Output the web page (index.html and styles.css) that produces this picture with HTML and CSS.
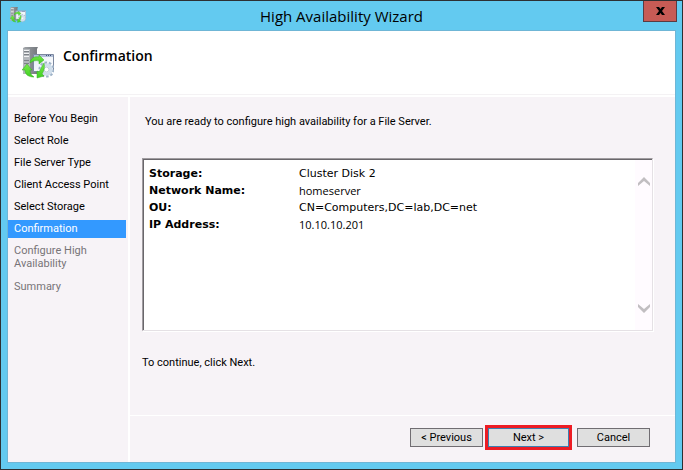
FILE: index.html
```html
<!DOCTYPE html>
<html lang="en">
<head>
<meta charset="utf-8">
<title>High Availability Wizard</title>
<link rel="stylesheet" href="styles.css">
</head>
<body>
<svg class="defs" aria-hidden="true">
  <defs>
    <linearGradient id="tower" x1="0" x2="1">
      <stop offset="0" stop-color="#a4a8ac"/><stop offset=".5" stop-color="#898d92"/><stop offset="1" stop-color="#74787d"/>
    </linearGradient>
    <linearGradient id="pane" x1="0" x2="1" y2="1">
      <stop offset="0" stop-color="#e6edf5"/><stop offset="1" stop-color="#ffffff"/>
    </linearGradient>
    <linearGradient id="leaf" y1="0" y2="1" x2="0">
      <stop offset="0" stop-color="#7bea4c"/><stop offset="1" stop-color="#3fcf22"/>
    </linearGradient>
    <symbol id="cluster" viewBox="0 0 32 32">
      <path d="M1 1l2-1h13l-1 2v25H1z" fill="url(#tower)"/>
      <path d="M1 2h7v25H1z" fill="#b4b8bc"/>
      <path d="M2 3h5v1H2zM2 6h5v1H2zM2 9h5v1H2z" fill="#f2f3f4"/>
      <path d="M2 4h5v1H2zM2 7h5v1H2zM2 13h5v1H2zM2 16h5v1H2z" fill="#7e8388"/>
      <path d="M11.500 7.500h20v17h-20z" fill="url(#pane)" stroke="#7c88a0"/>
      <path d="M12 8h19v2H12z" fill="#b3c0d8"/>
      <path d="M24 8h1v1h-1zM26 8h1v1h-1zM28 8h1v1h-1z" fill="#40547a"/>
      <circle cx="24.500" cy="22.500" r="6.800" fill="none" stroke="#9fb3c8" stroke-width="2.600" stroke-dasharray="2.500 1.770"/>
      <circle cx="24.500" cy="22.500" r="4.600" fill="#fff" stroke="#d0deeb" stroke-width="3.400"/>
      <circle cx="24.500" cy="22.500" r="2.500" fill="#fff" stroke="#a5b8ca" stroke-width=".800"/>
      <path d="M8 16c0-4 4-7 9-6V8l5 5-5 4v-3c-4-1-6 0-9 2z" fill="url(#leaf)" stroke="#37ac22" stroke-width=".500"/>
      <path d="M5 17l5 6H8c0 3 1 5 4 7-5 0-9-2-9-7H0z" fill="url(#leaf)" stroke="#37ac22" stroke-width=".500"/>
      <path d="M22 16c1 4 0 8-2 11l2 2-7 2v-7l2 1c2-3 3-6 5-9z" fill="url(#leaf)" stroke="#37ac22" stroke-width=".500"/>
    </symbol>
  </defs>
</svg>
<div class="window">
  <header class="titlebar">
    <svg class="titlebar-icon" aria-hidden="true"><use href="#cluster"/></svg>
    <div class="titlebar-text">High Availability Wizard</div>
    <button class="close" type="button" aria-label="Close">
      <svg viewBox="0 0 9 8" aria-hidden="true"><path d="M0 0h3l1.500 2L6 0h3L6 4l3 4H6L4.500 6 3 8H0l3-4z"/></svg>
    </button>
  </header>
  <div class="client">
    <div class="heading">
      <svg class="heading-icon" aria-hidden="true"><use href="#cluster"/></svg>
      <h1>Confirmation</h1>
    </div>
    <div class="body">
      <nav class="steps">
        <ol>
          <li>Before You Begin</li>
          <li>Select Role</li>
          <li>File Server Type</li>
          <li>Client Access Point</li>
          <li>Select Storage</li>
          <li class="current" aria-current="step">Confirmation</li>
          <li class="pending">Configure High Availability</li>
          <li class="pending">Summary</li>
        </ol>
      </nav>
      <main class="page">
        <p class="intro">You are ready to configure high availability for a File Server.</p>
        <div class="summary">
          <table>
            <tr><th scope="row">Storage:</th><td>Cluster Disk 2</td></tr>
            <tr><th scope="row">Network Name:</th><td class="edited">homeserver</td></tr>
            <tr><th scope="row">OU:</th><td>CN=Computers,DC=lab,DC=net</td></tr>
            <tr><th scope="row">IP Address:</th><td class="edited">10.10.10.201</td></tr>
          </table>
          <div class="scrollbar" aria-hidden="true">
            <svg viewBox="0 0 12 9"><path d="M0 6l6-6 6 6v3L6 4 0 9z"/></svg>
            <svg viewBox="0 0 12 9"><path d="M0 3l6 6 6-6V0L6 5 0 0z"/></svg>
          </div>
        </div>
        <p class="hint">To continue, click Next.</p>
        <footer class="actions">
          <button type="button">&lt; Previous</button>
          <span class="highlight"><button class="primary" type="button">Next &gt;</button></span>
          <button type="button">Cancel</button>
        </footer>
      </main>
    </div>
  </div>
</div>
</body>
</html>
```
FILE: styles.css
```css
* {
  box-sizing: border-box;
}

body {
  margin: 0;
  font: 11px/14px Roboto, "Liberation Sans", sans-serif;
  color: #000;
}

h1, p, ol {
  margin: 0;
  padding: 0;
}

button {
  padding: 0;
  font: inherit;
  color: inherit;
}

.defs {
  position: absolute;
  width: 0;
  height: 0;
}

.window {
  display: flex;
  flex-direction: column;
  min-height: 100vh;
  padding: 0 7px 7px;
  border: 1px solid #2d3033;
  background: #63caf0;
}

.titlebar {
  display: flex;
  align-items: flex-start;
  height: 30px;
}

.titlebar-icon {
  width: 16px;
  height: 16px;
  margin: 6px 0 0 2px;
}

.titlebar-text {
  flex: 1;
  padding-left: 14px;
  font: 15px/30px "Open Sans", sans-serif;
  text-align: center;
}

.close {
  display: grid;
  place-items: center;
  width: 34px;
  height: 21px;
  margin-right: -2px;
  border: 1px solid #5a3b42;
  border-top: 0;
  background: #c75b55;
}

.close svg {
  width: 9px;
  height: 8px;
}

.client {
  display: flex;
  flex: 1;
  flex-direction: column;
  background: #fff;
  box-shadow: 0 0 0 1px #6fb6d6;
}

.heading {
  display: flex;
  gap: 9px;
  height: 64px;
  padding: 16px 14px 0;
  border-bottom: 1px solid #f4f2f4;
}

.heading-icon {
  width: 32px;
  height: 32px;
}

h1 {
  font: 600 14px/18px "Open Sans", sans-serif;
}

.body {
  display: flex;
  flex: 1;
  gap: 2px;
  padding-top: 2px;
}

.steps {
  width: 120px;
  padding-top: 13px;
  background: #f7f3f7;
}

.steps ol {
  list-style: none;
}

.steps li {
  margin: 0 2px 4px 0;
  padding: 2px 6px;
}

.steps .current {
  background: #3399ff;
  color: #fff;
}

.steps .pending {
  margin-bottom: 6px;
  padding-right: 24px;
  color: #777477;
  line-height: 13px;
}

.page {
  display: flex;
  flex: 1;
  flex-direction: column;
  background: #f7f3f7;
}

.intro {
  padding: 18px 15px 0;
}

.summary {
  display: flex;
  height: 173px;
  margin: 29px 22px 0 12px;
  border: 1px solid;
  border-color: #a09ca0 #e5e1e5 #e5e1e5 #a09ca0;
  background: linear-gradient(#fffbff, #fffbff) right / 17px 100% no-repeat #fff;
  box-shadow: inset 1px 1px #69666b, 1px 1px #fff;
}

.summary table {
  flex: 1;
  align-self: flex-start;
  margin: 6px 0 0 6px;
  border-collapse: collapse;
  font: 11px/17px "DejaVu Sans", sans-serif;
}

.summary th {
  width: 150px;
  padding: 0;
  text-align: left;
}

.summary td {
  padding: 0;
}

.summary .edited {
  font: 11px/17px "Open Sans", sans-serif;
}

.scrollbar {
  display: flex;
  flex-direction: column;
  justify-content: space-between;
  align-items: center;
  width: 17px;
  padding: 18px 0 17px;
}

.scrollbar svg {
  width: 12px;
  height: 9px;
  fill: #c1bec1;
}

.hint {
  padding: 25px 12px 0;
}

.actions {
  display: flex;
  justify-content: flex-end;
  align-items: center;
  margin-top: auto;
  padding: 9px 25px 12px;
  border-top: 1px solid #fff;
}

.actions button {
  width: 73px;
  height: 19px;
  border: 1px solid #706d72;
  background: #dfdfdf;
}

.highlight {
  display: flex;
  margin: 0 5px 0 2px;
  border: 3px solid #ed1c24;
}

.actions .primary {
  width: 81px;
  border-color: #3c7fb1;
}
```
